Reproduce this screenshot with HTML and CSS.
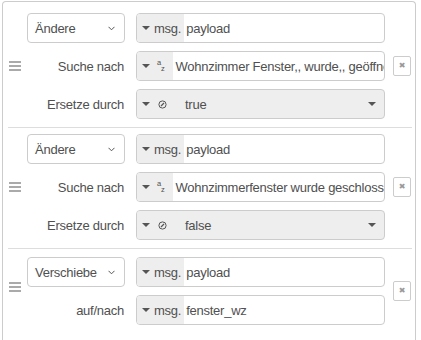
FILE: index.html
```html
<!DOCTYPE html>
<html lang="de">
<head>
    <meta charset="UTF-8">
    <title>Change rules</title>
    <link rel="stylesheet" href="styles.css">
</head>
<body>

    <div class="rules">
        <ol class="rule-list">

            <!-- Rule 1: Ändere / Suche nach -->
            <li class="rule">
                <div class="handle"><span></span><span></span><span></span></div>
                <div class="rule-body">
                    <div class="rule-row">
                        <div class="select">Ändere
                            <svg class="chevron" width="7" height="5" viewBox="0 0 7 5"><polyline points="0.5,0.8 3.5,3.8 6.5,0.8" fill="none" stroke="#555" stroke-width="1"/></svg>
                        </div>
                        <div class="typed">
                            <div class="type-btn"><i class="caret"></i><span>msg.</span></div>
                            <div class="value">payload</div>
                        </div>
                    </div>
                    <div class="rule-row">
                        <div class="rule-label">Suche nach</div>
                        <div class="typed">
                            <div class="type-btn type-btn-str"><i class="caret"></i><span class="az"><sup>a</sup><sub>z</sub></span></div>
                            <div class="value">Wohnzimmer Fenster,, wurde,, geöffnet</div>
                        </div>
                    </div>
                    <div class="rule-row">
                        <div class="rule-label">Ersetze durch</div>
                        <div class="typed typed-bool">
                            <div class="type-btn"><i class="caret"></i>
                                <svg class="bool-icon" width="9" height="9" viewBox="0 0 9 9"><circle cx="4.5" cy="4.5" r="3.6" fill="none" stroke="#555" stroke-width="1"/><line x1="3" y1="6" x2="6" y2="3" stroke="#555" stroke-width="1.2"/></svg>
                            </div>
                            <div class="value">true</div>
                            <i class="caret caret-right"></i>
                        </div>
                    </div>
                </div>
                <button class="delete">✖</button>
            </li>

            <!-- Rule 2 -->
            <li class="rule">
                <div class="handle"><span></span><span></span><span></span></div>
                <div class="rule-body">
                    <div class="rule-row">
                        <div class="select">Ändere
                            <svg class="chevron" width="7" height="5" viewBox="0 0 7 5"><polyline points="0.5,0.8 3.5,3.8 6.5,0.8" fill="none" stroke="#555" stroke-width="1"/></svg>
                        </div>
                        <div class="typed">
                            <div class="type-btn"><i class="caret"></i><span>msg.</span></div>
                            <div class="value">payload</div>
                        </div>
                    </div>
                    <div class="rule-row">
                        <div class="rule-label">Suche nach</div>
                        <div class="typed">
                            <div class="type-btn type-btn-str"><i class="caret"></i><span class="az"><sup>a</sup><sub>z</sub></span></div>
                            <div class="value">Wohnzimmerfenster wurde geschlossen</div>
                        </div>
                    </div>
                    <div class="rule-row">
                        <div class="rule-label">Ersetze durch</div>
                        <div class="typed typed-bool">
                            <div class="type-btn"><i class="caret"></i>
                                <svg class="bool-icon" width="9" height="9" viewBox="0 0 9 9"><circle cx="4.5" cy="4.5" r="3.6" fill="none" stroke="#555" stroke-width="1"/><line x1="3" y1="6" x2="6" y2="3" stroke="#555" stroke-width="1.2"/></svg>
                            </div>
                            <div class="value">false</div>
                            <i class="caret caret-right"></i>
                        </div>
                    </div>
                </div>
                <button class="delete">✖</button>
            </li>

            <!-- Rule 3: Verschiebe -->
            <li class="rule rule-move">
                <div class="handle"><span></span><span></span><span></span></div>
                <div class="rule-body">
                    <div class="rule-row">
                        <div class="select">Verschiebe
                            <svg class="chevron" width="7" height="5" viewBox="0 0 7 5"><polyline points="0.5,0.8 3.5,3.8 6.5,0.8" fill="none" stroke="#555" stroke-width="1"/></svg>
                        </div>
                        <div class="typed">
                            <div class="type-btn"><i class="caret"></i><span>msg.</span></div>
                            <div class="value">payload</div>
                        </div>
                    </div>
                    <div class="rule-row">
                        <div class="rule-label">auf/nach</div>
                        <div class="typed">
                            <div class="type-btn"><i class="caret"></i><span>msg.</span></div>
                            <div class="value">fenster_wz</div>
                        </div>
                    </div>
                </div>
                <button class="delete">✖</button>
            </li>

        </ol>
    </div>

</body>
</html>
```

FILE: styles.css
```css
body {
    margin: 0;
    background: #fff;
    font-family: "Liberation Sans", Arial, sans-serif;
    font-size: 13px;
    letter-spacing: -0.25px;
    color: #505050;
}

.rules {
    margin: 1px 5px 0 2px;
    height: 339px;
    border: 1px solid #ccc;
    border-bottom: none;
    border-radius: 4px 4px 0 0;
    overflow: hidden;
    box-sizing: border-box;
}

.rule-list {
    list-style: none;
    margin: 0;
    padding: 5px 3px 0 5px;
}

.rule {
    display: flex;
    align-items: center;
    padding: 6px 0 8px 1px;
    border-bottom: 1px solid #ddd;
}

.rule-move {
    padding-top: 8px;
    border-bottom: none;
}

/* drag handle */
.handle {
    display: flex;
    flex-direction: column;
    gap: 2px;
    width: 12px;
    margin-right: 6px;
}

.rule-move .handle {
    margin-bottom: 8px;
}

.handle span {
    display: block;
    height: 2px;
    background: #aaa;
}

.rule-body {
    display: flex;
    flex-direction: column;
    gap: 8px;
}

.rule-row {
    display: flex;
    align-items: center;
    gap: 11px;
    height: 30px;
}

.rule-label {
    width: 98px;
    text-align: right;
    padding-right: 1px;
    box-sizing: border-box;
}

.select {
    width: 98px;
    height: 30px;
    box-sizing: border-box;
    border: 1px solid #ccc;
    border-radius: 4px;
    background: #fff;
    display: flex;
    align-items: center;
    justify-content: space-between;
    padding: 0 9px 0 7px;
}

.typed {
    width: 249px;
    height: 30px;
    box-sizing: border-box;
    border: 1px solid #ccc;
    border-radius: 4px;
    display: flex;
    align-items: stretch;
    overflow: hidden;
    background: #fff;
}

.typed-bool {
    background: #eee;
}

.type-btn {
    background: #eee;
    display: flex;
    align-items: center;
    padding: 0 3px 0 5px;
}

.type-btn span {
    margin-left: 4px;
}

.caret {
    display: inline-block;
    width: 0;
    height: 0;
    border-left: 4px solid transparent;
    border-right: 4px solid transparent;
    border-top: 4px solid #555;
}

.caret-right {
    align-self: center;
    margin-right: 8px;
}

.az {
    display: inline-flex;
    align-items: center;
    font-size: 9px;
    line-height: 1;
    margin-left: 7px !important;
    margin-right: 6px;
}

.az sup {
    position: relative;
    top: -3px;
    vertical-align: baseline;
}

.az sub {
    position: relative;
    top: 3px;
    vertical-align: baseline;
}

.bool-icon {
    margin-left: 8px;
}

.value {
    flex: 1;
    display: flex;
    align-items: center;
    padding-left: 2px;
    white-space: nowrap;
    overflow: hidden;
}

.typed-bool .value {
    padding-left: 15px;
}

.delete {
    margin-left: 8px;
    width: 18px;
    height: 20px;
    padding: 0;
    border: 1px solid #ccc;
    border-radius: 2px;
    background: #fff;
    color: #999;
    font-size: 8px;
    line-height: 18px;
    font-family: "DejaVu Sans", sans-serif;
}
```
